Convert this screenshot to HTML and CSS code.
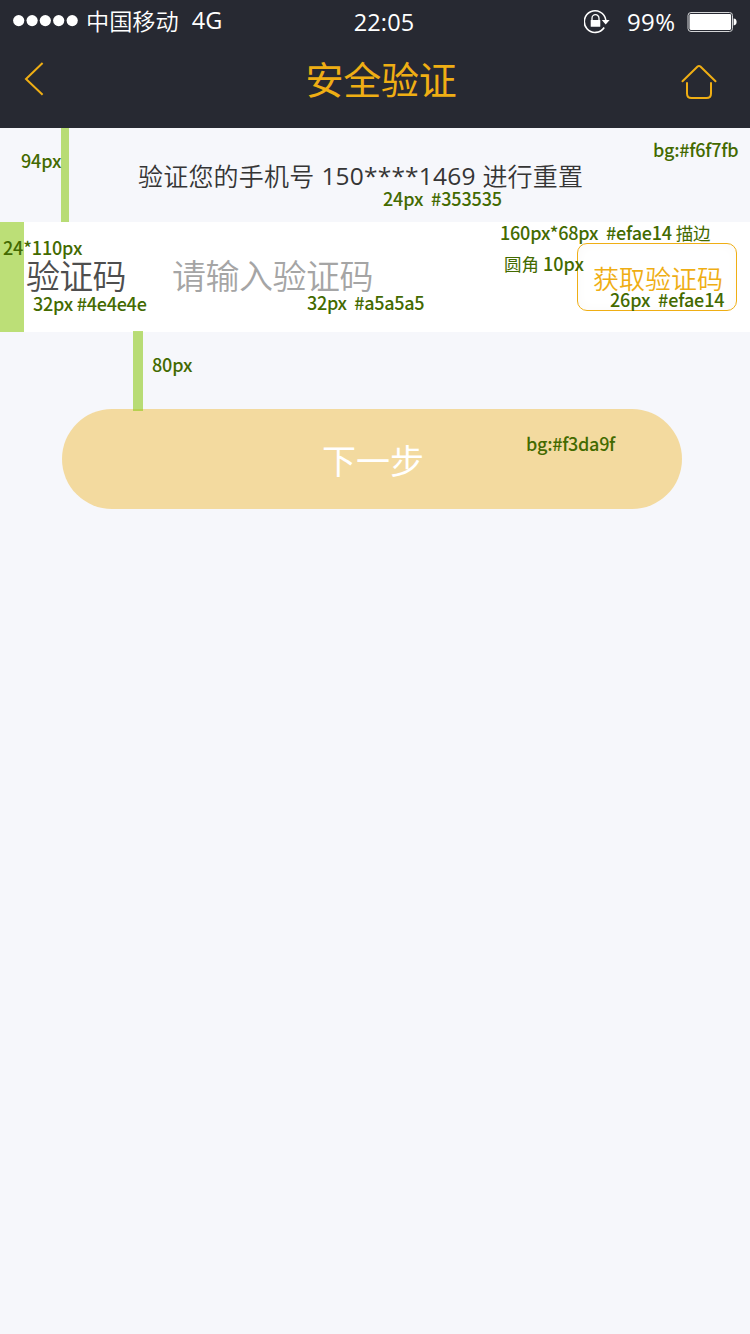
FILE: index.html
```html
<!DOCTYPE html>
<html lang="zh-CN">
<head>
<meta charset="utf-8">
<title>安全验证</title>
<link rel="stylesheet" href="styles.css">
</head>
<body>
<div class="screen">
  <header class="header">
    <div class="status">
      <div class="status-left">
        <svg class="signal" width="66" height="12" viewBox="0 0 66 12" fill="#fff"><ellipse cx="5.7" cy="5.6" rx="5.6" ry="5.6"/><ellipse cx="19.1" cy="5.6" rx="5.6" ry="5.6"/><ellipse cx="32.3" cy="5.6" rx="5.6" ry="5.6"/><ellipse cx="45.7" cy="5.6" rx="5.6" ry="5.6"/><ellipse cx="59.2" cy="5.6" rx="5.6" ry="5.6"/></svg>
        <span class="carrier">中国移动</span>
        <span class="network">4G</span>
      </div>
      <span class="time">22:05</span>
      <div class="status-right">
        <svg class="lock" width="28" height="26" viewBox="0 0 28 26"><path d="M20.2 18.5A10.8 10.8 0 1 1 21.8 11" fill="none" stroke="#fff" stroke-width="1.6"/><path d="M17.8 11H25.6L21.7 15.4Z" fill="#fff"/><path d="M8 12V9.2a3.5 3.5 0 0 1 7 0V12" fill="none" stroke="#fff" stroke-width="1.3"/><rect x="6.7" y="11" width="9.6" height="6.8" rx=".6" fill="#fff"/></svg>
        <span class="percent">99%</span>
        <svg class="battery" width="50" height="22" viewBox="0 0 50 22"><rect x="1" y="1.5" width="44.5" height="19" rx="3" fill="none" stroke="#d4d5d7" stroke-width="1"/><rect x="2.5" y="3" width="41.6" height="16" rx="1.4" fill="#fff"/><path d="M46.6 7.6C48.8 7.8 49.6 9.2 49.6 11S48.8 14.2 46.6 14.4Z" fill="#fff"/></svg>
      </div>
    </div>
    <div class="nav">
      <svg class="back" width="20" height="34" viewBox="0 0 20 34"><path d="M18.6 1L2 17L18.6 32.7" fill="none" stroke="#efae14" stroke-width="2"/></svg>
      <h1 class="title">安全验证</h1>
      <svg class="home" width="36" height="36" viewBox="0 0 36 36" fill="none" stroke="#efae14" stroke-width="2" stroke-linecap="round" stroke-linejoin="round"><path d="M1.5 17.3L16.6 2.5Q18 1.4 19.4 2.5L34.5 17.3"/><path d="M6 19V29.5Q6 34 10.5 34H25.5Q30 34 30 29.5V19"/></svg>
    </div>
  </header>
  <main>
    <p class="hint"><span>验证您的手机号</span><span class="phone">150****1469</span><span>进行重置</span></p>
    <div class="field">
      <label class="label">验证码</label>
      <span class="placeholder">请输入验证码</span>
      <button class="get-code">获取验证码</button>
    </div>
    <button class="next">下一步</button>
  </main>
  <div class="bar bar-top"></div>
  <div class="bar bar-side"></div>
  <div class="bar bar-gap"></div>
  <span class="note n-94">94px</span>
  <span class="note n-bg">bg:#f6f7fb</span>
  <span class="note n-24">24px  #353535</span>
  <span class="note n-160">160px*68px  #efae14 <span class="note-cjk">描边</span></span>
  <span class="note n-radius"><span class="note-cjk">圆角</span> 10px</span>
  <span class="note n-26">26px  #efae14</span>
  <span class="note n-110">24*110px</span>
  <span class="note n-label">32px #4e4e4e</span>
  <span class="note n-ph">32px  #a5a5a5</span>
  <span class="note n-80">80px</span>
  <span class="note n-next">bg:#f3da9f</span>
</div>
</body>
</html>
```
FILE: styles.css
```css
* { box-sizing: border-box; }
body { margin: 0; font-family: "Noto Sans CJK SC", sans-serif; background: #f6f7fb; }
button { margin: 0; padding: 0; font-family: inherit; }
svg { display: block; flex: none; }
.screen { position: relative; width: 750px; height: 1334px; overflow: hidden; background: #f6f7fb; }
.header { height: 128px; background: #272932; }
.status { display: grid; grid-template-columns: 1fr auto 1fr; height: 44px; padding: 0 13px; align-items: center; color: #fff; line-height: 44px; }
.status-left { display: flex; height: 44px; align-items: center; padding-bottom: 3px; }
.carrier { margin: -2px 0 0 7px; font-size: 23.2px; font-weight: 350; }
.network { margin: -1px 0 0 13px; font: 400 23.5px/44px "Open Sans", "Noto Sans", sans-serif; }
.time { font: 400 23.5px/44px "Open Sans", "Noto Sans", sans-serif; letter-spacing: .1px; margin-left: 18px; }
.status-right { display: flex; height: 44px; align-items: center; justify-content: flex-end; }
.percent { width: 51px; margin: 0 9px 0 15px; font: 400 24px/44px "Open Sans", "Noto Sans", sans-serif; letter-spacing: .4px; }
.nav { display: flex; height: 70px; padding: 0 33px 0 24px; align-items: center; justify-content: space-between; }
.home { margin-top: 6px; }
.title { margin: -3px 0 0 37px; color: #efae14; font-size: 38px; line-height: 70px; font-weight: 400; letter-spacing: -.3px; }
main { display: flex; flex-direction: column; }
.hint { display: flex; height: 94px; margin: 0; padding: 0 0 0 138px; align-items: center; color: #353535; font-size: 25px; font-weight: 350; letter-spacing: .2px; }
.phone { width: 154px; margin: 0 7px; padding-top: 1px; font-family: "Open Sans", "Noto Sans", sans-serif; font-size: 24.5px; font-weight: 400; letter-spacing: .2px; }
.field { display: flex; height: 110px; padding: 0 13px 0 26px; align-items: center; background: #fff; }
.label { width: 146px; margin-top: -6px; color: #4e4e4e; font-size: 34px; font-weight: 350; letter-spacing: -.7px; }
.placeholder { flex: 1; margin-top: -6px; color: #a5a5a5; font-size: 34px; font-weight: 350; letter-spacing: -.5px; }
.get-code { width: 160px; height: 68px; padding: 0 0 0 2px; border: 1px solid #efae14; border-radius: 10px; background: #fff; box-shadow: inset 0 0 12px #faf9f8; color: #efae14; font-size: 26px; font-weight: 350; }
.next { width: 620px; height: 100px; margin: 77px 0 0 62px; padding: 1px 0 0 2px; border: 0; border-radius: 50px; background: #f3da9f; color: #fff; font-size: 34px; font-weight: 400; }
.bar { position: absolute; background: rgba(143, 201, 29, .6); }
.bar-top { left: 61px; top: 128px; width: 8px; height: 94px; }
.bar-side { left: 0; top: 222px; width: 24px; height: 110px; }
.bar-gap { left: 133px; top: 331px; width: 10px; height: 80px; }
.note { position: absolute; color: #436a00; font-size: 18px; line-height: 20px; font-weight: 500; letter-spacing: -.15px; white-space: pre; }
.note-cjk { font-weight: 400; font-size: 17.5px; }
.n-94 { left: 21px; top: 150px; }
.n-bg { left: 653px; top: 139px; letter-spacing: -.25px; }
.n-24 { left: 383px; top: 188px; }
.n-160 { left: 500px; top: 222px; letter-spacing: -.2px; }
.n-radius { left: 504px; top: 253px; letter-spacing: 0; }
.n-26 { left: 610px; top: 289px; }
.n-110 { left: 3px; top: 237px; }
.n-label { left: 33px; top: 293px; letter-spacing: -.25px; }
.n-ph { left: 307px; top: 292px; letter-spacing: -.3px; }
.n-80 { left: 152px; top: 354px; }
.n-next { left: 526px; top: 433px; letter-spacing: -.3px; }
```
